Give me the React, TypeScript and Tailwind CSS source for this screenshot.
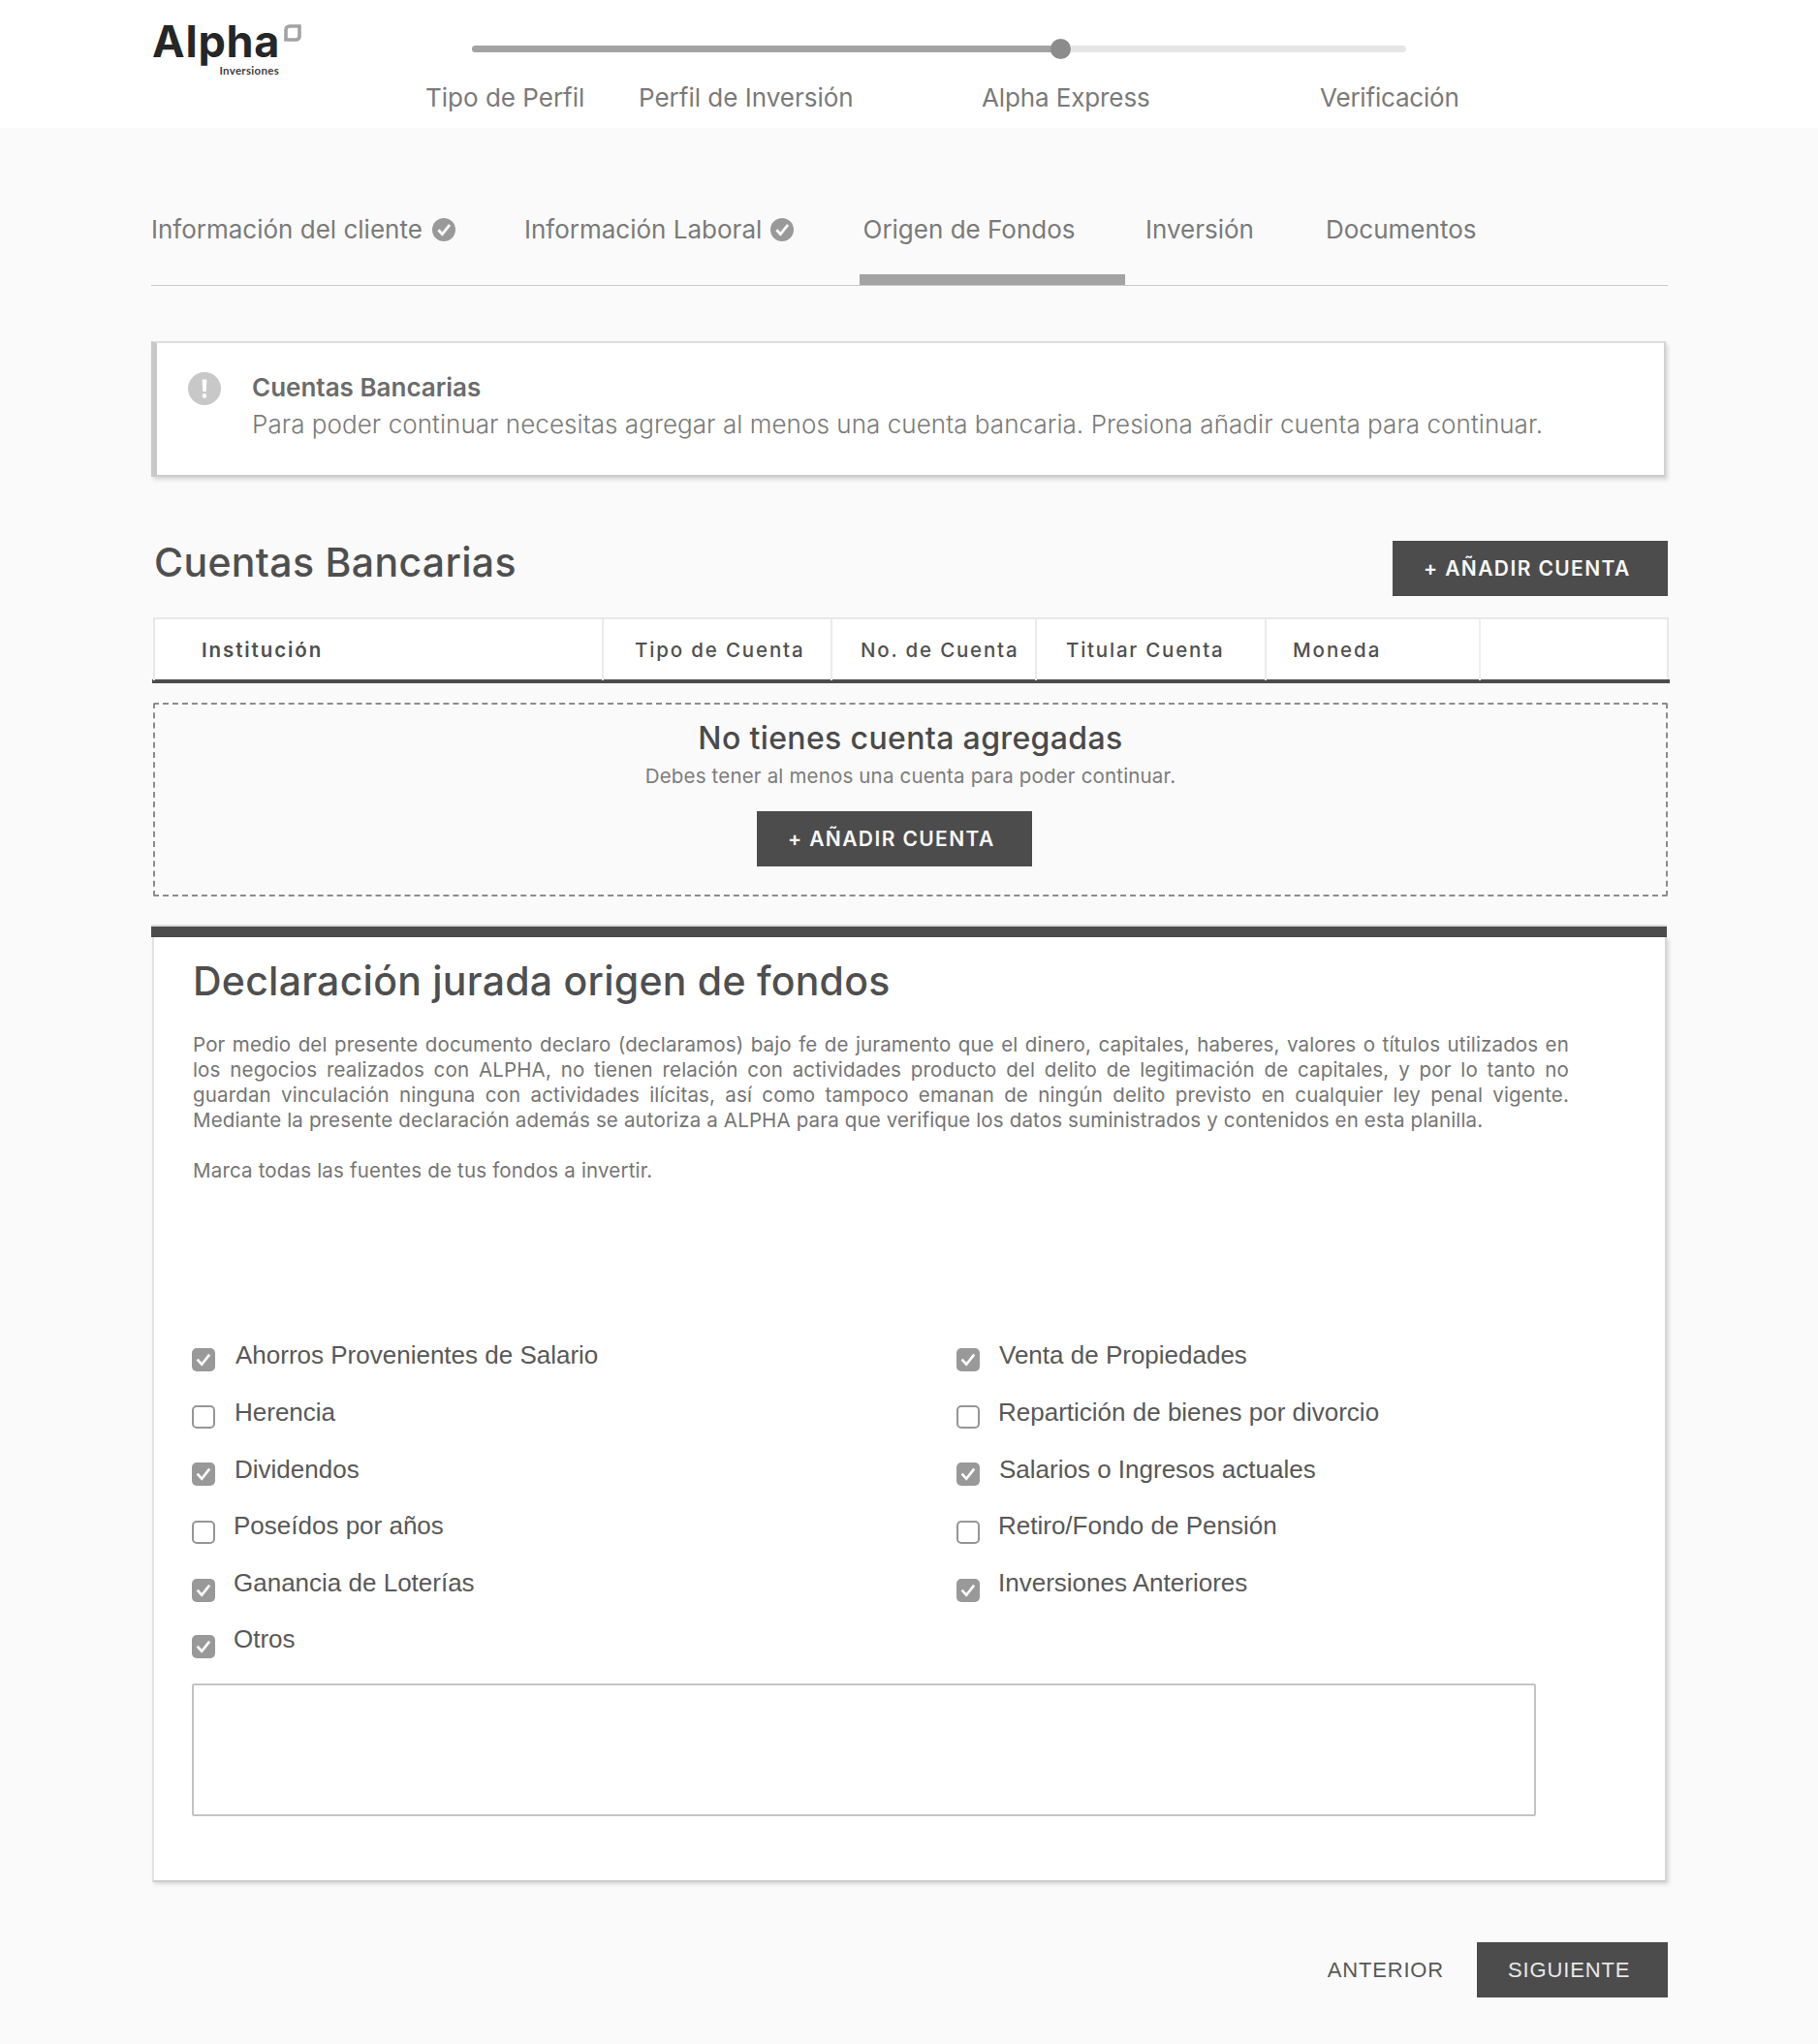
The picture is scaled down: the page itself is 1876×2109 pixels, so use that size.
import React from "react";

function LogoMark() {
  return (
    <svg width="18" height="18" viewBox="0 0 18 18" fill="none">
      <path d="M6 2H16V12Q16 16 12 16H2V6Q2 2 6 2Z" stroke="#a3a3a3" strokeWidth="3.6" />
    </svg>
  );
}

function Logo() {
  return (
    <div className="ml-[157px] mt-5 flex w-[154px] items-start gap-[5px]">
      <div className="flex w-[131px] flex-col items-end text-[#262626]">
        <div className="h-[47px] self-start text-[45px] font-bold leading-[45px] tracking-[0.8px]">Alpha</div>
        <div className="h-3 font-['Lato'] text-[11.5px] font-bold leading-[12px] tracking-[0.3px] text-[#404040]">
          Inversiones
        </div>
      </div>
      <div className="mt-[5px]">
        <LogoMark />
      </div>
    </div>
  );
}

function DoneIcon() {
  return (
    <svg width="24" height="24" viewBox="0 0 24 24" fill="none">
      <circle cx="12" cy="12" r="12" fill="#999999" />
      <path d="M6.4 12.2L10.4 16.6L18 7" stroke="#fff" strokeWidth="2.8" />
    </svg>
  );
}

function Header() {
  return (
    <header className="flex h-[132px] bg-white">
      <Logo />
      <div className="ml-[128px] w-[1080px] pt-[47px]">
        <div className="relative ml-12 flex h-[7px] w-[964px] overflow-visible rounded-full bg-[#e6e6e6]">
          <div className="h-full w-[607px] rounded-l-full bg-[#a3a3a3]" />
          <div className="absolute -top-[7px] left-[597px] h-[21px] w-[21px] rounded-full bg-[#8c8c8c]" />
        </div>
        <div className="mt-[31px] grid grid-cols-[219px_355px_350px_auto] whitespace-nowrap text-[26px] leading-8 text-[#7a7a7a]">
          <span>Tipo de Perfil</span>
          <span className="pl-px">Perfil de Inversión</span>
          <span className="tracking-[-0.12px]">Alpha Express</span>
          <span className="-ml-px tracking-[-0.2px]">Verificación</span>
        </div>
      </div>
    </header>
  );
}

function Tabs() {
  return (
    <nav className="pt-[89px]">
      <div className="grid grid-cols-[385px_350px_291px_186px_auto] whitespace-nowrap text-[26px] leading-8 text-[#7a7a7a]">
        <span className="flex items-center gap-[10px]">
          Información del cliente <DoneIcon />
        </span>
        <span className="flex items-center gap-[9px]">
          Información Laboral <DoneIcon />
        </span>
        <span className="-ml-[0.5px]">Origen de Fondos</span>
        <span>Inversión</span>
        <span>Documentos</span>
      </div>
      <div className="ml-[731px] mt-[30px] h-[11px] w-[274px] bg-[#a3a3a3]" />
      <div className="h-px w-[1565px] bg-[#c8c8c8]" />
    </nav>
  );
}

function Notice() {
  return (
    <section className="mt-[57px] flex h-[140px] w-[1563px] border-2 border-l-[6px] border-[#dedede] border-b-[#cccccc] border-l-[#c8c8c8] border-r-[#d2d2d2] bg-white pl-8 pt-[27px] shadow-[2px_3px_4px_rgba(0,0,0,0.14)]">
      <svg width="34" height="34" viewBox="0 0 34 34" className="mt-[3px]">
        <circle cx="17" cy="17" r="17" fill="#c8c8c8" />
        <path d="M14.6 7.5H19.4L18.7 20H15.3Z" fill="#fff" />
        <circle cx="17" cy="24.4" r="2.3" fill="#fff" />
      </svg>
      <div className="ml-8 whitespace-nowrap text-[26px] leading-[38px]">
        <h2 className="font-semibold text-[#6b6b6b]">Cuentas Bancarias</h2>
        <p className="font-light tracking-[0.06px] text-[#7a7a7a]">
          Para poder continuar necesitas agregar al menos una cuenta bancaria. Presiona añadir cuenta para continuar.
        </p>
      </div>
    </section>
  );
}

function AddButton({ className }: { className: string }) {
  return (
    <button
      className={`h-[57px] w-[284px] whitespace-nowrap bg-[#4c4c4c] pl-8 text-left text-[21px] font-semibold leading-[57px] tracking-[1.39px] text-[#f7f7f7] ${className}`}
    >
      + AÑADIR CUENTA
    </button>
  );
}

function AccountsTable() {
  return (
    <section>
      <div className="mt-[63px] flex w-[1565px] justify-between">
        <h1 className="ml-[3px] text-[41px] font-medium leading-[51px] tracking-[0.33px] text-[#4f4f4f]">
          Cuentas Bancarias
        </h1>
        <AddButton className="mt-[3px]" />
      </div>
      <div className="ml-px mt-[22px] w-[1566px] border-b-4 border-[#4c4c4c]">
        <div className="mx-px grid h-16 grid-cols-[463px_236px_211px_237px_221px_1fr] whitespace-nowrap border-r-2 border-t-2 border-[#e8e8e8] bg-white text-[20.5px] font-medium leading-[63px] tracking-[1.84px] text-[#505050]">
          <div className="border-l-2 border-[#e8e8e8] pl-12 font-semibold tracking-[1.9px]">Institución</div>
          <div className="border-l-2 border-[#ebebeb] pl-8">Tipo de Cuenta</div>
          <div className="border-l-2 border-[#ebebeb] pl-[29px] tracking-[1.8px]">No. de Cuenta</div>
          <div className="border-l-2 border-[#ebebeb] pl-[30px] tracking-[1.78px]">Titular Cuenta</div>
          <div className="border-l-2 border-[#ebebeb] pl-[27px] tracking-[1.9px]">Moneda</div>
          <div className="border-l-2 border-[#efefef]" />
        </div>
      </div>
      <div className="ml-[2px] mt-[20px] flex h-[200px] w-[1563px] flex-col items-center rounded-[2px] border-2 border-dashed border-[#8c8c8c] pt-[15px]">
        <h3 className="text-[32px] font-medium leading-10 tracking-[0.36px] text-[#4a4a4a]">
          No tienes cuenta agregadas
        </h3>
        <p className="mt-[5px] text-[20.5px] leading-7 tracking-[0.17px] text-[#7c7c7c]">
          Debes tener al menos una cuenta para poder continuar.
        </p>
        <AddButton className="mr-[33px] mt-[22px]" />
      </div>
    </section>
  );
}

type Source = { label: string; checked: boolean; box: string; gap: string };

const leftSources: Source[] = [
  { label: "Ahorros Provenientes de Salario", checked: true, box: "mt-[9px]", gap: "ml-[21px]" },
  { label: "Herencia", checked: false, box: "mt-[9px]", gap: "ml-[20px]" },
  { label: "Dividendos", checked: true, box: "mt-[9px]", gap: "ml-[20px]" },
  { label: "Poseídos por años", checked: false, box: "mt-[11px]", gap: "ml-[19px]" },
  { label: "Ganancia de Loterías", checked: true, box: "mt-[12px]", gap: "ml-[19px]" },
  { label: "Otros", checked: true, box: "mt-[12px]", gap: "ml-[19px]" },
];

const rightSources: Source[] = [
  { label: "Venta de Propiedades", checked: true, box: "mt-[9px]", gap: "ml-[20px]" },
  { label: "Repartición de bienes por divorcio", checked: false, box: "mt-[9px]", gap: "ml-[19px]" },
  { label: "Salarios o Ingresos actuales", checked: true, box: "mt-[9px]", gap: "ml-[20px]" },
  { label: "Retiro/Fondo de Pensión", checked: false, box: "mt-[11px]", gap: "ml-[19px]" },
  { label: "Inversiones Anteriores", checked: true, box: "mt-[12px]", gap: "ml-[19px]" },
];

function SourceRow({ source }: { source: Source }) {
  return (
    <label className="flex h-[58.6px] items-start whitespace-nowrap font-['Liberation_Sans',sans-serif] text-[26px] leading-8 text-[#585858]">
      {source.checked ? (
        <span className={`flex h-6 w-6 items-center justify-center rounded-[5px] bg-[#999999] ${source.box}`}>
          <svg width="16" height="14" viewBox="0 0 16 14" fill="none">
            <path d="M1.6 6.6L6.2 11.8L14.2 1.6" stroke="#fff" strokeWidth="2.6" />
          </svg>
        </span>
      ) : (
        <span className={`h-6 w-6 rounded-[5px] border-2 border-[#969696] bg-white ${source.box}`} />
      )}
      <span className={source.gap}>{source.label}</span>
    </label>
  );
}

function Declaration() {
  return (
    <section className="mt-[29px] h-[988px] w-[1564px] border-t-2 border-[#dcdcdc]">
      <div className="h-[11px] bg-[#4c4c4c]" />
      <div className="ml-px h-[975px] border-2 border-t-0 border-[#e3e3e3] border-b-[#cdcdcd] border-r-[#d6d6d6] bg-white pl-[39px] pt-5 shadow-[2px_2px_4px_rgba(0,0,0,0.14)]">
        <h1 className="ml-px whitespace-nowrap text-[41px] font-medium leading-[50px] tracking-[0.25px] text-[#4f4f4f]">
          Declaración jurada origen de fondos
        </h1>
        <div className="ml-px mt-[28px] w-[1420px] whitespace-nowrap text-[20.5px] leading-[26.1px] tracking-[0.15px] text-[#757575]">
          <p className="[text-align-last:justify]">
            Por medio del presente documento declaro (declaramos) bajo fe de juramento que el dinero, capitales, haberes, valores o títulos utilizados en
          </p>
          <p className="[text-align-last:justify]">
            los negocios realizados con ALPHA, no tienen relación con actividades producto del delito de legitimación de capitales, y por lo tanto no
          </p>
          <p className="[text-align-last:justify]">
            guardan vinculación ninguna con actividades ilícitas, así como tampoco emanan de ningún delito previsto en cualquier ley penal vigente.
          </p>
          <p>
            Mediante la presente declaración además se autoriza a ALPHA para que verifique los datos suministrados y contenidos en esta planilla.
          </p>
          <p className="mt-[26px] tracking-[0.18px]">Marca todas las fuentes de tus fondos a invertir.</p>
        </div>
        <div className="mt-[161px] grid h-[355px] grid-cols-[789px_1fr]">
          <div>
            {leftSources.map((s) => (
              <SourceRow key={s.label} source={s} />
            ))}
          </div>
          <div>
            {rightSources.map((s) => (
              <SourceRow key={s.label} source={s} />
            ))}
          </div>
        </div>
        <textarea className="block h-[137px] w-[1387px] resize-none rounded-[2px] border-2 border-[#c4c4c4] bg-white" />
      </div>
    </section>
  );
}

export default function App() {
  return (
    <div className="h-[2109px] w-[1876px] overflow-hidden bg-[#fafafa] font-['Inter',sans-serif]">
      <Header />
      <main className="ml-[156px] w-[1570px]">
        <Tabs />
        <Notice />
        <AccountsTable />
        <Declaration />
        <footer className="mt-[62px] flex h-[57px] w-[1565px] justify-end font-['Liberation_Sans',sans-serif] text-[22px] leading-[57px]">
          <button className="mr-[34px] tracking-[0.816px] text-[#585858]">ANTERIOR</button>
          <button className="w-[197px] bg-[#4c4c4c] pl-8 text-left tracking-[0.85px] text-[#e8e8e8]">SIGUIENTE</button>
        </footer>
      </main>
    </div>
  );
}
